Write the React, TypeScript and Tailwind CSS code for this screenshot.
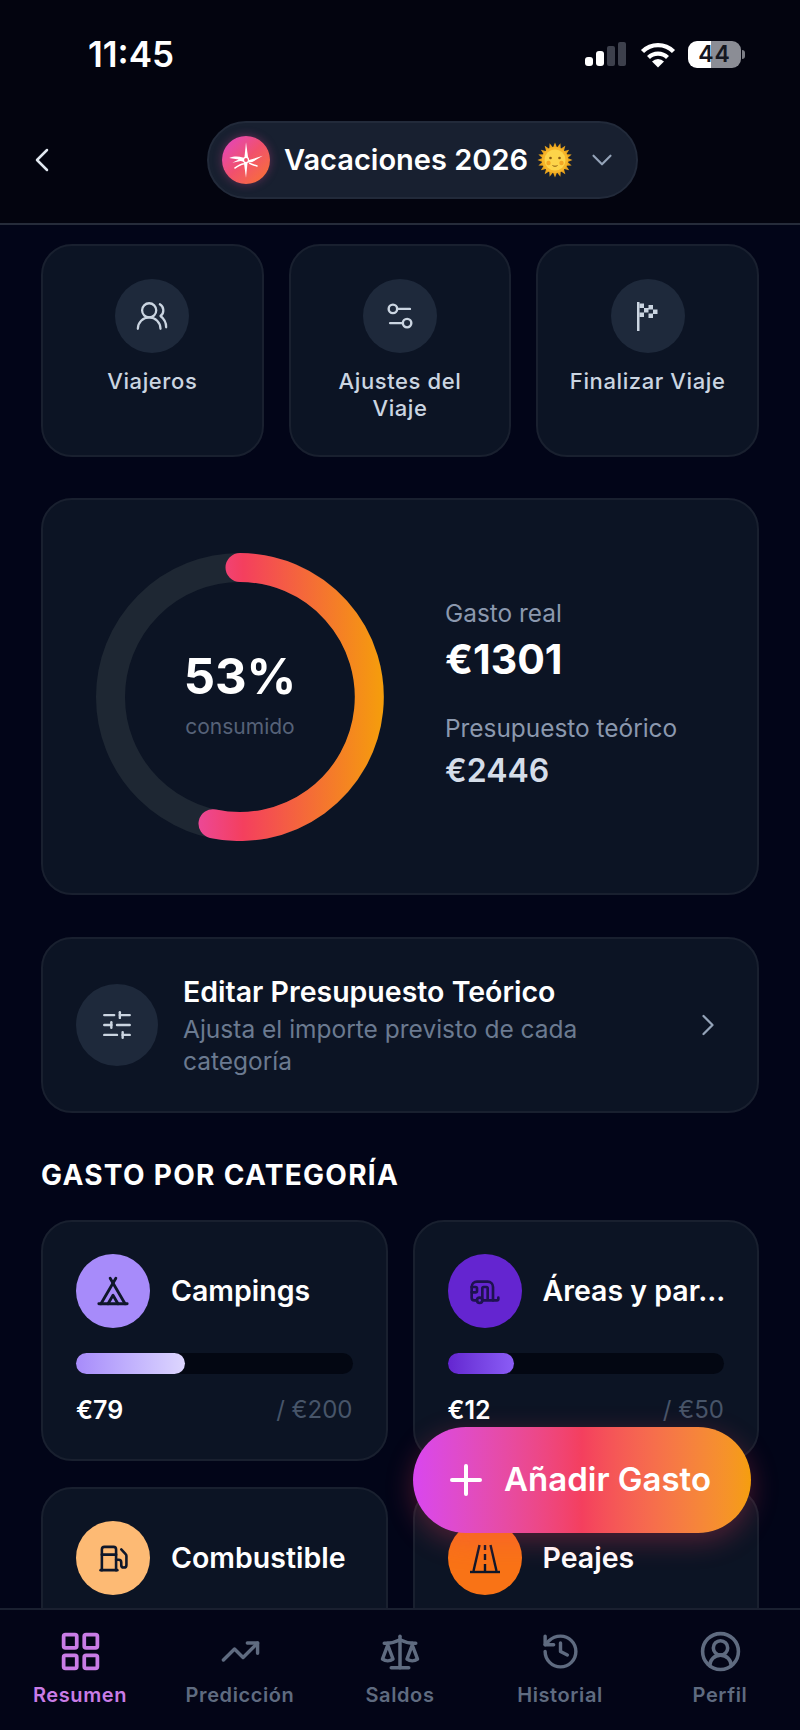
import {
  Caravan,
  ChevronDown,
  ChevronLeft,
  ChevronRight,
  CircleUserRound,
  Fuel,
  History,
  LayoutGrid,
  Plus,
  Scale,
  Settings2,
  SlidersHorizontal,
  Tent,
  TrendingUp,
  UsersRound,
} from "lucide-react";
import type { ReactNode } from "react";

function StatusIcons() {
  return (
    <div className="flex items-center">
      <svg width="42" height="26" viewBox="0 0 42 26" className="mr-[14px]">
        <rect x="1" y="16" width="8" height="9" rx="3" fill="#fff" />
        <rect x="12" y="10" width="8" height="15" rx="3" fill="#fff" />
        <rect x="23" y="5" width="8" height="20" rx="2" fill="#3d404c" />
        <rect x="34" y="1" width="8" height="24" rx="2" fill="#3d404c" />
      </svg>
      <svg width="36" height="27" viewBox="0 0 36 27" className="mr-[12px]">
        <path d="M2.500 10.500a22 22 0 0 1 31 0" fill="none" stroke="#fff" strokeWidth="4.400" />
        <path d="M8.500 16.500a13.500 13.500 0 0 1 19 0" fill="none" stroke="#fff" strokeWidth="4.200" />
        <path d="M18 26.500 12 20.500a8.400 8.400 0 0 1 12 0Z" fill="#fff" />
      </svg>
      <div className="flex items-center">
        <div className="flex h-[27px] w-[53px] items-center justify-center rounded-[9px] bg-[linear-gradient(90deg,#ffffff_43%,#8b8d95_43%)] text-[23px] font-semibold tracking-[1px] text-[#15171f]">
          44
        </div>
        <div className="ml-[1px] h-[9px] w-[3px] rounded-r-full bg-[#7b7d85]" />
      </div>
    </div>
  );
}

function TripLogo() {
  return (
    <div className="flex h-[48px] w-[48px] shrink-0 items-center justify-center rounded-full bg-gradient-to-br from-[#e23fc4] via-[#f1506c] to-[#f97316] shadow-[0_0_10px_rgba(236,72,153,0.35)]">
      <svg width="42" height="42" viewBox="0 0 40 40" fill="none">
        <path d="M20 3 22 17.500 20 37 18 22.500Z" fill="#fff" />
        <path d="M4 18c5-2 9-1.500 13-.5l6 2.500 13-4-10 6-5 .5-6-1.500-8 1.500 6-3Z" fill="#fff" />
        <path d="M9 28c4-3 6-4 9-4.500M31 26c-3-1-6-2-8-3" stroke="#fff" strokeWidth="1.400" />
        <circle cx="20" cy="20" r="2.400" fill="#f1506c" stroke="#fff" strokeWidth="1.200" />
      </svg>
    </div>
  );
}

function SunFace() {
  const spikes = Array.from({ length: 20 }, (_, i) => i * 18);
  return (
    <svg width="36" height="36" viewBox="0 0 36 36" className="shrink-0">
      {spikes.map((deg) => (
        <path key={deg} d="M15.800 6 18 .5 20.200 6Z" fill="#e9a31c" transform={`rotate(${deg} 18 18)`} />
      ))}
      <circle cx="18" cy="18" r="13" fill="#f7b52a" />
      <circle cx="18" cy="18" r="10.500" fill="#fdd44a" />
      <circle cx="13.500" cy="16" r="1.300" fill="#8a5a12" />
      <circle cx="22.500" cy="16" r="1.300" fill="#8a5a12" />
      <circle cx="11.500" cy="21" r="2.200" fill="#f5a623" />
      <circle cx="24.500" cy="21" r="2.200" fill="#f5a623" />
      <path d="M15.500 23.500c1.500 1 3.500 1 5 0" fill="none" stroke="#8a5a12" strokeWidth="1" />
    </svg>
  );
}

function FlagIcon() {
  return (
    <svg width="21" height="29" viewBox="0 0 21 29" fill="#cbd5e1">
      <rect x="0" y="0" width="2.500" height="29" />
      <path d="M2.500 1.500h4.500v4.500H2.500ZM11.500 3h4.500v4.500h-4.500ZM7 6h4.500v4.500H7ZM16 7.500h4.500V12H16ZM2.500 10.500H7V15H2.500ZM11.500 11.500H16V16h-4.500Z" />
    </svg>
  );
}

function RoadIcon() {
  return (
    <svg width="34" height="34" viewBox="0 0 34 34" fill="none" stroke="#0f172a" strokeWidth="2.400">
      <path d="M2 31h30" />
      <path d="M11.500 4 5.500 30" />
      <path d="M22.500 4l6 26" />
      <path d="M17 4v5M17 13v6M17 23v7" />
    </svg>
  );
}

function ActionCard({ icon, label }: { icon: ReactNode; label: string }) {
  return (
    <div className="flex h-[213px] flex-col items-center rounded-[31px] border-2 border-[#19202f] bg-[#0c1424] px-[28px] pt-[33px]">
      <div className="flex h-[74px] w-[74px] shrink-0 items-center justify-center rounded-full bg-[#1e293b]">{icon}</div>
      <p className="mt-[15px] text-center text-[22px] leading-[27px] font-medium tracking-[0.6px] text-[#cbd5e1]">
        {label}
      </p>
    </div>
  );
}

interface CategoryProps {
  icon: ReactNode;
  name: string;
  circle: string;
  bar?: string;
  pct?: number;
  spent?: string;
  total?: string;
}

function CategoryCard({ icon, name, circle, bar, pct, spent, total }: CategoryProps) {
  return (
    <div className="h-[241px] rounded-[31px] border-2 border-[#19202f] bg-[#0c1424] px-[33px] pt-[32px]">
      <div className="flex items-center gap-[21px]">
        <div className={`flex h-[74px] w-[74px] shrink-0 items-center justify-center rounded-full ${circle}`}>{icon}</div>
        <p className="text-[28.500px] leading-[36px] font-semibold whitespace-nowrap text-white">{name}</p>
      </div>
      {spent && (
        <>
          <div className="mt-[25px] h-[21px] rounded-full bg-[#030712]">
            <div className={`h-full rounded-full ${bar}`} style={{ width: `${pct}%` }} />
          </div>
          <div className="mt-[21px] flex items-center justify-between leading-[30px]">
            <span className="text-[25px] font-semibold text-white">{spent}</span>
            <span className="text-[24px] text-[#475569]">/ {total}</span>
          </div>
        </>
      )}
    </div>
  );
}

function NavItem({ icon, label, active }: { icon: ReactNode; label: string; active?: boolean }) {
  return (
    <div className={`flex flex-col items-center ${active ? "text-[#c97ce6]" : "text-[#5f6b80]"}`}>
      <div className="flex h-[45px] items-center justify-center">{icon}</div>
      <span className="mt-[8px] text-[20px] leading-[26px] font-semibold tracking-[0.6px]">{label}</span>
    </div>
  );
}

function BudgetRing() {
  return (
    <div className="relative h-[288px] w-[288px] shrink-0">
      <svg width="288" height="288" viewBox="0 0 288 288" fill="none">
        <defs>
          <linearGradient id="ring" gradientUnits="userSpaceOnUse" x1="100" y1="0" x2="288" y2="0">
            <stop offset="0" stopColor="#ec4899" />
            <stop offset="0.25" stopColor="#f43f5e" />
            <stop offset="1" stopColor="#f59e0b" />
          </linearGradient>
        </defs>
        <circle cx="144" cy="144" r="129.500" stroke="#1e2733" strokeWidth="29" />
        <path
          d="M144 14.500A129.500 129.500 0 1 1 117 270.700"
          stroke="url(#ring)"
          strokeWidth="29"
          strokeLinecap="round"
        />
      </svg>
      <div className="absolute inset-0 flex flex-col items-center justify-center pb-[6px]">
        <p className="text-[49px] leading-[58px] font-bold text-white">53%</p>
        <p className="mt-[8px] text-[21px] leading-[26px] text-[#566278]">consumido</p>
      </div>
    </div>
  );
}

export default function App() {
  return (
    <div className="relative flex h-[1730px] w-[800px] flex-col overflow-hidden bg-[#020518] [font-family:Inter,sans-serif]">
      <header className="shrink-0 border-b-2 border-[#262c3a] bg-[#03040f] pt-[34px] pb-[24px]">
        <div className="flex h-[40px] items-center justify-between pr-[55px] pl-[88px]">
          <span className="text-[35px] font-semibold text-white">11:45</span>
          <StatusIcons />
        </div>
        <div className="mt-[47px] flex items-center pl-[22px]">
          <ChevronLeft size={40} strokeWidth={1.5} className="text-[#e2e8f0]" />
          <div className="ml-[145px] flex h-[78px] w-[431px] items-center rounded-full border-2 border-[#222a3a] bg-[#182030] pl-[13px]">
            <TripLogo />
            <span className="ml-[14px] text-[29px] font-semibold whitespace-nowrap text-white">Vacaciones 2026</span>
            <span className="ml-[9px]">
              <SunFace />
            </span>
            <ChevronDown size={34} strokeWidth={1.5} className="ml-[12px] text-[#94a3b8]" />
          </div>
        </div>
      </header>

      <main className="min-h-0 flex-1 overflow-hidden px-[41px] pt-[19px]">
        <div className="grid grid-cols-3 gap-[25px]">
          <ActionCard icon={<UsersRound size={34} strokeWidth={1.6} className="text-[#cbd5e1]" />} label="Viajeros" />
          <ActionCard icon={<Settings2 size={34} strokeWidth={1.7} className="text-[#cbd5e1]" />} label="Ajustes del Viaje" />
          <ActionCard icon={<FlagIcon />} label={"Finalizar\u00a0Viaje"} />
        </div>

        <section className="mt-[41px] flex h-[397px] items-center rounded-[31px] border-2 border-[#19202f] bg-[#0c1424] pl-[53px]">
          <BudgetRing />
          <div className="ml-[61px] pb-[4px]">
            <p className="text-[24.400px] leading-[30px] text-[#8b98ae]">Gasto real</p>
            <p className="mt-[7px] text-[41px] leading-[48px] font-bold text-white">€1301</p>
            <p className="mt-[30px] text-[24.400px] leading-[30px] text-[#8b98ae]">Presupuesto teórico</p>
            <p className="mt-[8px] text-[32px] leading-[40px] font-semibold text-[#d5dde9]">€2446</p>
          </div>
        </section>

        <section className="mt-[42px] flex h-[176px] items-center rounded-[31px] border-2 border-[#19202f] bg-[#0c1424] pr-[31px] pl-[33px]">
          <div className="flex h-[82px] w-[82px] shrink-0 items-center justify-center rounded-full bg-[#1e293b]">
            <SlidersHorizontal size={34} strokeWidth={1.7} className="text-[#cbd5e1]" />
          </div>
          <div className="ml-[25px] w-[440px]">
            <p className="text-[28.500px] leading-[36px] font-semibold text-white">Editar Presupuesto Teórico</p>
            <p className="mt-[3px] text-[24.500px] leading-[32px] text-[#6b7a90]">Ajusta el importe previsto de cada categoría</p>
          </div>
          <ChevronRight size={36} strokeWidth={1.5} className="ml-auto text-[#94a3b8]" />
        </section>

        <h2 className="mt-[45px] text-[28px] leading-[34px] font-bold tracking-[1.3px] text-white">GASTO POR CATEGORÍA</h2>

        <div className="mt-[28px] grid grid-cols-2 gap-x-[25px] gap-y-[26px]">
          <CategoryCard
            icon={<Tent size={34} strokeWidth={2} className="text-[#0f172a]" />}
            name="Campings"
            circle="bg-[#a78bfa]"
            bar="bg-gradient-to-r from-[#a78bfa] to-[#ddd6fe]"
            pct={39.5}
            spent="€79"
            total="€200"
          />
          <CategoryCard
            icon={<Caravan size={32} strokeWidth={2} className="text-[#1e1250]" />}
            name="Áreas y par..."
            circle="bg-[#6425d0]"
            bar="bg-gradient-to-r from-[#6425d0] to-[#8b5cf6]"
            pct={24}
            spent="€12"
            total="€50"
          />
          <CategoryCard icon={<Fuel size={31} strokeWidth={2} className="text-[#0f172a]" />} name="Combustible" circle="bg-[#fdba74]" />
          <CategoryCard icon={<RoadIcon />} name="Peajes" circle="bg-[#f97316]" />
        </div>
      </main>

      <nav className="grid h-[122px] shrink-0 grid-cols-5 border-t-2 border-[#1a2030] bg-[#030517] pt-[19px]">
        <NavItem active icon={<LayoutGrid size={45} strokeWidth={2} />} label="Resumen" />
        <NavItem icon={<TrendingUp size={41} strokeWidth={2} />} label="Predicción" />
        <NavItem icon={<Scale size={42} strokeWidth={2} />} label="Saldos" />
        <NavItem icon={<History size={41} strokeWidth={2} />} label="Historial" />
        <NavItem icon={<CircleUserRound size={43} strokeWidth={2} />} label="Perfil" />
      </nav>

      <button className="absolute right-[49px] bottom-[197px] flex h-[106px] w-[338px] items-center rounded-full bg-gradient-to-r from-[#d946ef] via-[#f43f5e] to-[#f59e0b] pl-[29px] text-white shadow-[0_8px_28px_rgba(244,63,94,0.3)]">
        <Plus size={48} strokeWidth={2} />
        <span className="ml-[14px] text-[33px] font-semibold">Añadir Gasto</span>
      </button>
    </div>
  );
}
